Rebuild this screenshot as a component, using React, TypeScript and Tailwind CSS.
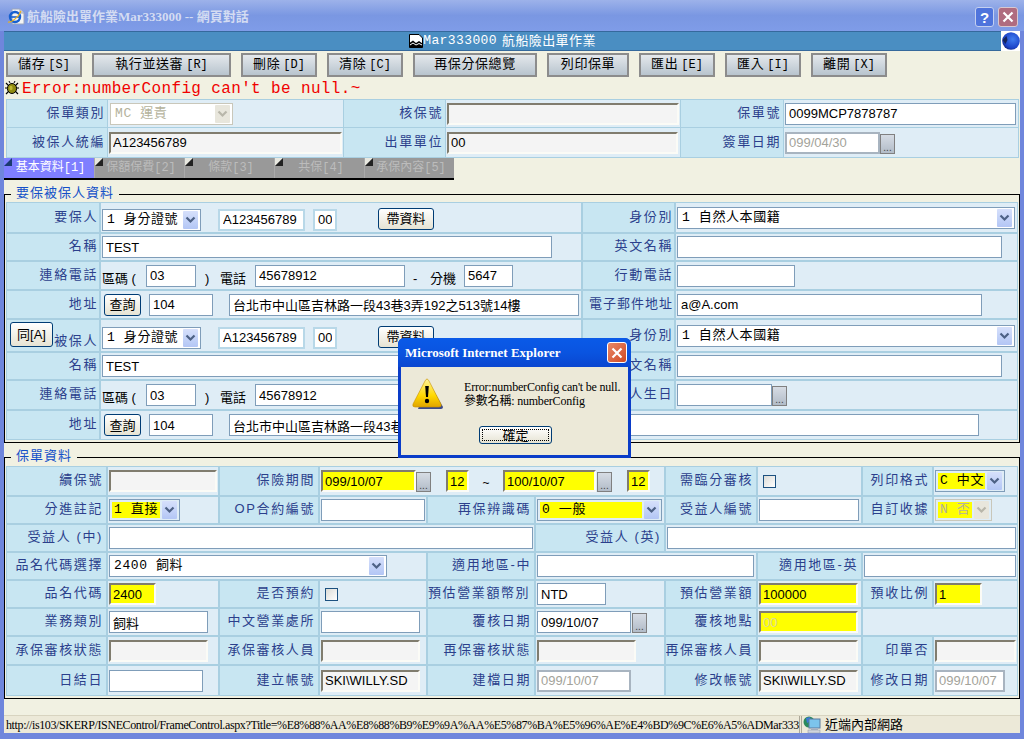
import React from 'react';

const inputNormal = 'h-[22px] px-[3px] text-[13px] text-black bg-white outline-none border border-[#7f9db9]';
const inputPale = 'h-[22px] px-[3px] text-[13px] text-black bg-white outline-none border-2 border-[#b8d8e8]';
const inputSunken = 'h-[22px] px-[2px] text-[13px] text-black bg-[#f4f4f4] outline-none border-2 border-t-[#807c6e] border-l-[#807c6e] border-r-[#fbfbf6] border-b-[#fbfbf6]';
const inputYellow = 'h-[22px] px-[2px] text-[13px] text-black bg-[#ffff00] outline-none border-2 border-t-[#807c6e] border-l-[#807c6e] border-r-[#fbfbf6] border-b-[#fbfbf6]';
const inputYellowPale = 'h-[22px] px-[2px] text-[13px] text-[#d8d8a0] bg-[#ffff00] outline-none border-2 border-t-[#807c6e] border-l-[#807c6e] border-r-[#fbfbf6] border-b-[#fbfbf6]';
const inputGray = 'h-[22px] px-[2px] text-[13px] text-[#a3a39a] bg-white outline-none border-2 border-[#a8b4c0]';
const monoFont = "font-['Liberation_Mono','Noto_Sans_CJK_TC',monospace]";

function Chevron({ disabled = false }: { disabled?: boolean }) {
  return (
    <svg width="11" height="8" viewBox="0 0 11 8">
      <path d="M1.5 1.5 L5.5 5.5 L9.5 1.5" fill="none" stroke={disabled ? '#b8b6aa' : '#4d6185'} strokeWidth="2.2" />
    </svg>
  );
}

function Select({
  text,
  className,
  yellow = false,
  disabled = false,
}: {
  text: string;
  className: string;
  yellow?: boolean;
  disabled?: boolean;
}) {
  return (
    <div
      className={`h-[22px] flex items-stretch p-[2px] shrink-0 border ${
        disabled ? 'border-[#c9c7ba]' : 'border-[#7f9db9]'
      } ${yellow ? 'bg-[#dfedf6]' : 'bg-white'} ${className}`}
    >
      <div
        className={`flex-1 min-w-0 flex items-center pl-[2px] whitespace-pre text-[13px] tracking-[0.6px] ${monoFont} ${
          yellow ? 'bg-[#ffff00]' : ''
        } ${disabled ? 'text-[#b4b29c]' : 'text-black'}`}
      >
        {text}
      </div>
      <div
        className={`w-[15px] ml-[2px] -mt-px -mb-px flex items-center justify-center rounded-[1px] ${
          disabled ? 'bg-[#e8e6dc]' : 'bg-gradient-to-b from-[#d6e0fb] to-[#b3c6f5]'
        }`}
      >
        <Chevron disabled={disabled} />
      </div>
    </div>
  );
}

function DotsButton({ className = '' }: { className?: string }) {
  return (
    <div
      className={`w-[15px] h-[20px] mt-[2px] shrink-0 flex items-end justify-center text-[10px] leading-[11px] text-[#444] border border-[#808080] bg-gradient-to-b from-[#d6dce4] to-[#b2bcc8] ${className}`}
    >
      ...
    </div>
  );
}

function FormButton({ text, className = '' }: { text: string; className?: string }) {
  return (
    <button
      className={`h-[22px] shrink-0 rounded-[3px] border border-[#003c74] bg-gradient-to-b from-white to-[#e6e3d3] text-[13px] leading-none text-black ${className}`}
    >
      {text}
    </button>
  );
}

function Label({ text, className = '' }: { text: string; className?: string }) {
  return (
    <div
      className={`bg-[#c8e6f2] flex items-center justify-end pr-[1px] pb-[2px] text-[13px] tracking-[1.6px] text-[#2b3f8c] whitespace-nowrap overflow-hidden ${className}`}
    >
      {text}
    </div>
  );
}

function Cell({ children, className = '' }: { children?: React.ReactNode; className?: string }) {
  return <div className={`bg-[#dfedf6] flex items-center pl-[1px] min-w-0 ${className}`}>{children}</div>;
}

function Check({ className = '' }: { className?: string }) {
  return (
    <div className={`w-[13px] h-[13px] border border-[#1c5180] bg-gradient-to-br from-[#dcdcd7] to-white ${className}`} />
  );
}

function IeIcon() {
  return (
    <svg width="18" height="18" viewBox="0 0 18 18">
      <path d="M5 1 H13 L17 5 V16 H5 Z" fill="#f4f4f4" stroke="#9aa4bc" />
      <path d="M13 1 V5 H17" fill="#d4d8e4" stroke="#9aa4bc" />
      <circle cx="8" cy="9" r="5" fill="none" stroke="#1660d0" strokeWidth="2.4" />
      <path d="M3 9 H13" stroke="#1660d0" strokeWidth="1.6" />
      <path d="M1 14 C4 15 12 9 14 3" fill="none" stroke="#e8b020" strokeWidth="1.2" />
    </svg>
  );
}

function BugIcon() {
  return (
    <svg width="14" height="15" viewBox="0 0 14 15">
      <path d="M1 3 L4 6 M13 3 L10 6 M0 8 H3 M14 8 H11 M1 14 L4 11 M13 14 L10 11" stroke="#000" strokeWidth="1.2" />
      <path d="M5 3 L4 1 M9 3 L10 1" stroke="#000" strokeWidth="1" />
      <ellipse cx="7" cy="8.5" rx="4.6" ry="5" fill="#8f8a10" stroke="#000" />
      <ellipse cx="6" cy="8" rx="1.6" ry="2.2" fill="#c2bc30" />
    </svg>
  );
}

function GlobeIcon() {
  return (
    <svg width="19" height="20" viewBox="0 0 19 20">
      <defs>
        <radialGradient id="globe" cx="0.6" cy="0.4" r="0.7">
          <stop offset="0" stopColor="#3f7df0" />
          <stop offset="0.7" stopColor="#1c44c8" />
          <stop offset="1" stopColor="#0c1e70" />
        </radialGradient>
      </defs>
      <circle cx="10" cy="10" r="8.8" fill="url(#globe)" />
      <path d="M1.5 9 L5.5 5 L6.5 9 L4.5 13 Z" fill="#14245c" />
    </svg>
  );
}

function BrokenImage() {
  return (
    <svg width="14" height="14" viewBox="0 0 14 14">
      <path d="M0.5 0.5 H10 L13.5 4 V13.5 H0.5 Z" fill="#fff" stroke="#000" />
      <path d="M0.5 9 L4 6.5 L7 9 L10 7 L13.5 9.5 V13.5 H0.5 Z" fill="#000" />
      <path d="M1 11 L4 9 L7 11 L10 9.5 L13 11" fill="none" stroke="#fff" />
    </svg>
  );
}

function WarningIcon() {
  return (
    <svg width="32" height="32" viewBox="0 0 32 32">
      <defs>
        <linearGradient id="warn" x1="0" y1="0" x2="0" y2="1">
          <stop offset="0" stopColor="#fff39a" />
          <stop offset="0.6" stopColor="#ffd800" />
          <stop offset="1" stopColor="#e0a400" />
        </linearGradient>
      </defs>
      <path d="M16.5 4 L31 29 Q31 31 29 31 H6 Z" fill="#3b4a8a" />
      <path d="M15 1 Q16 1 17 3 L29 26 Q30 29 27 29 H3 Q0 29 1 26 L13 3 Q14 1 15 1 Z" fill="url(#warn)" stroke="#c89000" strokeWidth="0.6" />
      <path d="M13.2 8 H16.8 L16 19 H14 Z" fill="#000" />
      <circle cx="15" cy="23" r="2.2" fill="#000" />
    </svg>
  );
}

function NetworkIcon() {
  return (
    <svg width="18" height="18" viewBox="0 0 18 18">
      <circle cx="6" cy="6" r="5.5" fill="#2b8a5c" />
      <path d="M3 2 L7 1 L8 5 L4 7 Z" fill="#3a78d8" />
      <rect x="6" y="3" width="11" height="9" fill="#7cc4ec" stroke="#5a7aa0" />
      <rect x="8" y="12" width="7" height="2" fill="#a8b4c4" />
      <rect x="5" y="14" width="12" height="3" fill="#d0d4dc" stroke="#8a94a4" strokeWidth="0.5" />
    </svg>
  );
}

const toolbar = [
  { head: '儲存', key: '[S]', width: 'w-[76px]' },
  { head: '執行並送審', key: '[R]', width: 'w-[139px]' },
  { head: '刪除', key: '[D]', width: 'w-[76px]' },
  { head: '清除', key: '[C]', width: 'w-[76px]' },
  { head: '再保分保總覽', key: '', width: 'w-[124px]' },
  { head: '列印保單', key: '', width: 'w-[82px]' },
  { head: '匯出', key: '[E]', width: 'w-[76px]' },
  { head: '匯入', key: '[I]', width: 'w-[76px]' },
  { head: '離開', key: '[X]', width: 'w-[76px]' },
];

const tabs = ['基本資料[1]', '保額保費[2]', '條款[3]', '共保[4]', '承保內容[5]'];

function PersonRows({ role, first }: { role: string; first: boolean }) {
  return (
    <>
      {first ? (
        <Label text={role} />
      ) : (
        <div className="bg-[#c8e6f2] flex justify-between pl-[3px] pr-[1px] text-[13px] tracking-[1.6px] text-[#2b3f8c]">
          <button className="w-[43px] h-[25px] mt-[2px] rounded-[3px] border border-[#003c74] bg-gradient-to-b from-white to-[#e6e3d3] text-[13px] tracking-normal text-black">
            同[A]
          </button>
          <span className="self-end mb-[1px]">{role}</span>
        </div>
      )}
      <Cell className="pt-[4px]">
        <Select text="1 身分證號" className="w-[99px]" />
        <input readOnly defaultValue="A123456789" className={`${inputPale} w-[87px] ml-[17px]`} />
        <input readOnly defaultValue="00" className={`${inputPale} w-[24px] ml-[8px]`} />
        <FormButton text="帶資料" className="w-[56px] ml-[41px] -mt-[2px]" />
      </Cell>
      <Label text="身份別" />
      <Cell>
        <Select text="1 自然人本國籍" className="w-[338px]" />
      </Cell>

      <Label text="名稱" />
      <Cell>
        <input readOnly defaultValue="TEST" className={`${inputNormal} w-[450px]`} />
      </Cell>
      <Label text="英文名稱" />
      <Cell>
        <input readOnly className={`${inputNormal} w-[325px]`} />
      </Cell>

      <Label text="連絡電話" />
      <Cell>
        <span className="w-[44px] mt-[6px] text-[13px] whitespace-pre">區碼 (</span>
        <input readOnly defaultValue="03" className={`${inputNormal} w-[50px]`} />
        <span className="w-[59px] mt-[6px] pl-[9px] pr-[9px] text-[13px] flex justify-between">
          <span>)</span>
          <span>電話</span>
        </span>
        <input readOnly defaultValue="45678912" className={`${inputNormal} w-[150px]`} />
        {first && (
          <>
            <span className="w-[59px] mt-[6px] pl-[8px] pr-[8px] text-[13px] flex justify-between">
              <span>-</span>
              <span>分機</span>
            </span>
            <input readOnly defaultValue="5647" className={`${inputNormal} w-[49px]`} />
          </>
        )}
      </Cell>
      <Label text={first ? '行動電話' : '被保人生日'} />
      <Cell>
        {first ? (
          <input readOnly className={`${inputNormal} w-[118px]`} />
        ) : (
          <>
            <input readOnly className={`${inputNormal} w-[95px]`} />
            <DotsButton />
          </>
        )}
      </Cell>

      <Label text="地址" />
      {first ? (
        <>
          <Cell>
            <FormButton text="查詢" className="w-[37px] ml-[2px]" />
            <input readOnly defaultValue="104" className={`${inputNormal} w-[64px] ml-[8px]`} />
            <input
              readOnly
              defaultValue="台北市中山區吉林路一段43巷3弄192之513號14樓"
              className={`${inputNormal} w-[350px] ml-[16px]`}
            />
          </Cell>
          <Label text="電子郵件地址" className="tracking-[1px]" />
          <Cell>
            <input readOnly defaultValue="a@A.com" className={`${inputNormal} w-[305px]`} />
          </Cell>
        </>
      ) : (
        <Cell className="col-span-3">
          <FormButton text="查詢" className="w-[37px] ml-[2px]" />
          <input readOnly defaultValue="104" className={`${inputNormal} w-[64px] ml-[8px]`} />
          <input
            readOnly
            defaultValue="台北市中山區吉林路一段43巷3弄192之513號14樓"
            className={`${inputNormal} w-[750px] ml-[16px]`}
          />
        </Cell>
      )}
    </>
  );
}

export default function App() {
  return (
    <div className="relative w-[1024px] h-[739px] overflow-hidden flex flex-col bg-[#6f86dc] font-['Liberation_Sans','Noto_Sans_CJK_TC',sans-serif]">
      {/* Title bar */}
      <div className="h-[31px] shrink-0 flex items-center pt-[3px] pl-[7px] pr-[6px] bg-gradient-to-b from-[#9db2ea] via-[#7a97e2] to-[#7f9ce8]">
        <IeIcon />
        <span className="ml-[2px] text-[13px] font-bold text-[#d4dcf2] font-['Liberation_Serif','Noto_Sans_CJK_TC',serif]">
          航船險出單作業Mar333000 -- 網頁對話
        </span>
        <div className="ml-auto flex gap-[4px]">
          <div className="w-[19px] h-[20px] rounded-[3px] border border-[#c4d0f0] bg-[#4f74dc] flex items-center justify-center text-[15px] font-bold text-white leading-none">
            ?
          </div>
          <div className="w-[20px] h-[20px] rounded-[3px] border border-[#d8c8d0] bg-[#b06c80] flex items-center justify-center">
            <svg width="12" height="12" viewBox="0 0 12 12">
              <path d="M1.5 1.5 L10.5 10.5 M10.5 1.5 L1.5 10.5" stroke="#fff" strokeWidth="2.2" />
            </svg>
          </div>
        </div>
      </div>

      {/* Page */}
      <div className="flex-1 mx-[4px] flex flex-col bg-[#f1f1e2] min-h-0">
        <div className="h-[20px] shrink-0 flex bg-[#4a8ec2] border-t border-b border-[#35699c]">
          <div className="flex-1 flex items-center justify-center text-[13px] text-white tracking-[0.4px]">
            <BrokenImage />
            <span className={monoFont}>Mar333000</span>
            <span className="ml-[5px]">航船險出單作業</span>
          </div>
          <div className="w-[19px] -mt-px -mb-px bg-white">
            <GlobeIcon />
          </div>
        </div>

        {/* Toolbar */}
        <div className="flex gap-[10px] pl-[2px] pt-[2px] shrink-0">
          {toolbar.map((b) => (
            <button
              key={b.head}
              className={`${b.width} h-[24px] border-2 border-[#8c8c8c] bg-gradient-to-b from-[#e4e8ec] to-[#b8c4ce] text-[13px] tracking-[0.6px] text-black ${monoFont}`}
            >
              {b.head}
              {b.key && <span className="ml-[3px] text-[12px] tracking-normal">{b.key}</span>}
            </button>
          ))}
        </div>

        {/* Error line */}
        <div className="h-[22px] shrink-0 flex items-center pl-[1px] pb-[1px]">
          <BugIcon />
          <span className={`ml-[3px] mt-[3px] text-[16px] tracking-[0.36px] text-[#f00000] ${monoFont}`}>
            Error:numberConfig can't be null.~
          </span>
        </div>

        {/* Header form */}
        <div className="ml-[2px] w-[1013px] shrink-0 grid grid-cols-[100px_235px_101px_234px_102px_234px] grid-rows-[27px_29px] gap-x-px gap-y-px p-px bg-[#a9cfe1]">
          <Label text="保單類別" className="pr-[2px]" />
          <Cell className="pl-[2px]">
            <Select text="MC 運責" className="w-[123px]" disabled />
          </Cell>
          <Label text="核保號" className="pr-[2px]" />
          <Cell>
            <input readOnly className={`${inputSunken} w-[232px]`} />
          </Cell>
          <Label text="保單號" className="pr-[2px]" />
          <Cell>
            <input readOnly defaultValue="0099MCP7878787" className={`${inputNormal} w-[231px]`} />
          </Cell>

          <Label text="被保人統編" className="pr-[2px]" />
          <Cell>
            <input readOnly defaultValue="A123456789" className={`${inputSunken} w-[233px]`} />
          </Cell>
          <Label text="出單單位" className="pr-[2px]" />
          <Cell>
            <input readOnly defaultValue="00" className={`${inputSunken} w-[231px]`} />
          </Cell>
          <Label text="簽單日期" className="pr-[2px]" />
          <Cell>
            <input readOnly defaultValue="099/04/30" className={`${inputGray} w-[95px]`} />
            <DotsButton />
          </Cell>
        </div>

        {/* Tabs */}
        <div className="h-[22px] w-[450px] shrink-0 flex border-b-2 border-black">
          {tabs.map((t, i) => (
            <div
              key={t}
              className={`relative w-[90px] pl-[3px] flex items-center justify-center text-[12px] ${
                i === 0 ? 'bg-[#7f7fff] text-white' : 'bg-[#999999] text-[#bcbcbc] border-l border-[#aaaaaa]'
              } ${monoFont}`}
            >
              <svg className="absolute left-0 top-0" width="8" height="8" viewBox="0 0 8 8">
                <path d="M0 0 H8 L0 8 Z" fill={i === 0 ? '#7f7fff' : '#e8e8e0'} />
                <path d="M8 0 V8 H0 Z" fill={i === 0 ? '#1a3a70' : '#222222'} />
              </svg>
              {t}
            </div>
          ))}
        </div>

        {/* 要保被保人資料 */}
        <fieldset className="mt-[6px] border border-black shrink-0 px-px pb-[2px]">
          <legend className="ml-[5px] px-[5px] h-[16px] text-[13px] leading-[14px] tracking-[1px] text-[#1450c8]">要保被保人資料</legend>
          <div className="relative grid grid-cols-[92px_480px_91px_341px] grid-rows-[29px_26px_27px_27px_31px_26px_28px_28px] gap-[2px] p-px bg-[#a9cfe1]">
            <PersonRows role="要保人" first />
            <PersonRows role="被保人" first={false} />
          </div>
        </fieldset>

        {/* 保單資料 */}
        <fieldset className="mt-[6px] border border-black shrink-0 px-px pb-[2px]">
          <legend className="ml-[5px] px-[5px] h-[16px] text-[13px] leading-[14px] tracking-[1px] text-[#1450c8]">保單資料</legend>
          <div className="mt-px grid grid-cols-[99px_110px_98px_106px_106px_128px_90px_103px_69px_83px] grid-rows-[28px_26px_26px_26px_26px_26px_27px_29px] gap-[2px] p-px bg-[#a9cfe1]">
            {/* row 1 */}
            <Label text="續保號" className="pr-[3px]" />
            <Cell>
              <input readOnly className={`${inputSunken} w-[108px]`} />
            </Cell>
            <Label text="保險期間" className="pr-[3px]" />
            <Cell className="col-span-3">
              <input readOnly defaultValue="099/10/07" className={`${inputYellow} w-[95px]`} />
              <DotsButton />
              <input readOnly defaultValue="12" className={`${inputYellow} w-[23px] ml-[15px]`} />
              <span className="w-[34px] text-center text-[12px] mt-[4px]">~</span>
              <input readOnly defaultValue="100/10/07" className={`${inputYellow} w-[93px]`} />
              <DotsButton className="ml-px" />
              <input readOnly defaultValue="12" className={`${inputYellow} w-[23px] ml-[15px]`} />
            </Cell>
            <Label text="需臨分審核" className="pr-[3px]" />
            <Cell>
              <Check className="ml-[4px]" />
            </Cell>
            <Label text="列印格式" className="pr-[3px]" />
            <Cell>
              <Select text="C 中文" className="w-[70px]" yellow />
            </Cell>

            {/* row 2 */}
            <Label text="分進註記" className="pr-[3px]" />
            <Cell>
              <Select text="1 直接" className="w-[71px]" yellow />
            </Cell>
            <Label text="OP合約編號" className="pr-[3px]" />
            <Cell>
              <input readOnly className={`${inputNormal} w-[104px]`} />
            </Cell>
            <Label text="再保辨識碼" className="pr-[3px]" />
            <Cell>
              <Select text="0 一般" className="w-[125px]" yellow />
            </Cell>
            <Label text="受益人編號" className="pr-[3px]" />
            <Cell>
              <input readOnly className={`${inputNormal} w-[100px]`} />
            </Cell>
            <Label text="自訂收據" className="pr-[3px]" />
            <Cell>
              <Select text="N 否" className="w-[57px]" yellow disabled />
            </Cell>

            {/* row 3 */}
            <Label text="受益人 (中)" className="pr-[3px]" />
            <Cell className="col-span-4">
              <input readOnly className={`${inputNormal} w-[424px]`} />
            </Cell>
            <Label text="受益人 (英)" className="pr-[3px]" />
            <Cell className="col-span-4">
              <input readOnly className={`${inputNormal} w-[349px]`} />
            </Cell>

            {/* row 4 */}
            <Label text="品名代碼選擇" className="pr-[3px]" />
            <Cell className="col-span-3">
              <Select text="2400 飼料" className="w-[278px]" />
            </Cell>
            <Label text="適用地區-中" className="pr-[3px]" />
            <Cell className="col-span-2">
              <input readOnly className={`${inputNormal} w-[217px]`} />
            </Cell>
            <Label text="適用地區-英" className="pr-[3px]" />
            <Cell className="col-span-2">
              <input readOnly className={`${inputNormal} w-[152px]`} />
            </Cell>

            {/* row 5 */}
            <Label text="品名代碼" className="pr-[3px]" />
            <Cell>
              <input readOnly defaultValue="2400" className={`${inputYellow} w-[47px]`} />
            </Cell>
            <Label text="是否預約" className="pr-[3px]" />
            <Cell>
              <Check className="ml-[4px]" />
            </Cell>
            <Label text="預估營業額幣別" className="pr-[3px] tracking-[1.2px] justify-start" />
            <Cell>
              <input readOnly defaultValue="NTD" className={`${inputNormal} w-[69px]`} />
            </Cell>
            <Label text="預估營業額" className="pr-[3px]" />
            <Cell>
              <input readOnly defaultValue="100000" className={`${inputYellow} w-[99px]`} />
            </Cell>
            <Label text="預收比例" className="pr-[3px]" />
            <Cell>
              <input readOnly defaultValue="1" className={`${inputYellow} w-[47px]`} />
            </Cell>

            {/* row 6 */}
            <Label text="業務類別" className="pr-[3px]" />
            <Cell>
              <input readOnly defaultValue="飼料" className={`${inputNormal} w-[99px]`} />
            </Cell>
            <Label text="中文營業處所" className="pr-[3px]" />
            <Cell>
              <input readOnly className={`${inputNormal} w-[99px]`} />
            </Cell>
            <Label text="覆核日期" className="pr-[3px]" />
            <Cell>
              <input readOnly defaultValue="099/10/07" className={`${inputNormal} w-[94px]`} />
              <DotsButton className="ml-px" />
            </Cell>
            <Label text="覆核地點" className="pr-[3px]" />
            <Cell>
              <input readOnly defaultValue="00" className={`${inputYellowPale} w-[99px]`} />
            </Cell>
            <Cell className="col-span-2" />

            {/* row 7 */}
            <Label text="承保審核狀態" className="pr-[3px]" />
            <Cell>
              <input readOnly className={`${inputSunken} w-[99px]`} />
            </Cell>
            <Label text="承保審核人員" className="pr-[3px]" />
            <Cell>
              <input readOnly className={`${inputSunken} w-[99px]`} />
            </Cell>
            <Label text="再保審核狀態" className="pr-[3px]" />
            <Cell>
              <input readOnly className={`${inputSunken} w-[99px]`} />
            </Cell>
            <Label text="再保審核人員" className="pr-[3px]" />
            <Cell>
              <input readOnly className={`${inputSunken} w-[99px]`} />
            </Cell>
            <Label text="印單否" className="pr-[3px]" />
            <Cell>
              <input readOnly className={`${inputSunken} w-[81px]`} />
            </Cell>

            {/* row 8 */}
            <Label text="日結日" className="pr-[3px]" />
            <Cell>
              <input readOnly className={`${inputNormal} w-[94px]`} />
            </Cell>
            <Label text="建立帳號" className="pr-[3px]" />
            <Cell>
              <input readOnly defaultValue="SKI\WILLY.SD" className={`${inputSunken} w-[99px]`} />
            </Cell>
            <Label text="建檔日期" className="pr-[3px]" />
            <Cell>
              <input readOnly defaultValue="099/10/07" className={`${inputGray} w-[94px]`} />
            </Cell>
            <Label text="修改帳號" className="pr-[3px]" />
            <Cell>
              <input readOnly defaultValue="SKI\WILLY.SD" className={`${inputSunken} w-[99px]`} />
            </Cell>
            <Label text="修改日期" className="pr-[3px]" />
            <Cell>
              <input readOnly defaultValue="099/10/07" className={`${inputGray} w-[70px]`} />
            </Cell>
          </div>
        </fieldset>

        {/* Status bar */}
        <div className="mt-auto h-[18px] shrink-0 flex bg-[#ece9d8] border-t border-[#d8d4c0] text-[12px] text-black font-['Liberation_Serif','Noto_Sans_CJK_TC',serif]">
          <div className="w-[796px] pl-[2px] flex items-center whitespace-nowrap overflow-hidden border-r border-[#aca899] tracking-[-0.38px]">
            http://is103/SKERP/ISNEControl/FrameControl.aspx?Title=%E8%88%AA%E8%88%B9%E9%9A%AA%E5%87%BA%E5%96%AE%E4%BD%9C%E6%A5%ADMar333
          </div>
          <div className="flex-1 ml-[1px] pl-[1px] flex items-center gap-[4px] border-l border-[#aca899] text-[13px] font-['Liberation_Sans','Noto_Sans_CJK_TC',sans-serif]">
            <NetworkIcon />
            近端內部網路
          </div>
        </div>
      </div>
      <div className="h-[6px] shrink-0" />

      {/* Alert dialog */}
      <div className="absolute left-[398px] top-[338px] w-[233px] h-[120px] flex flex-col rounded-t-[6px] bg-[#0a3cc8] px-[3px] pb-[3px]">
        <div className="h-[29px] shrink-0 flex items-center pl-[7px] pr-[2px] -mx-[3px] rounded-t-[6px] bg-gradient-to-b from-[#0a5ae8] via-[#0a54e0] to-[#0a46d0]">
          <span className="text-[13px] font-bold text-white font-['Liberation_Serif',serif]">Microsoft Internet Explorer</span>
          <div className="ml-auto mr-[2px] w-[20px] h-[21px] rounded-[3px] border border-white bg-gradient-to-br from-[#e88868] to-[#d04820] flex items-center justify-center">
            <svg width="12" height="12" viewBox="0 0 12 12">
              <path d="M1.5 1.5 L10.5 10.5 M10.5 1.5 L1.5 10.5" stroke="#fff" strokeWidth="2.2" />
            </svg>
          </div>
        </div>
        <div className="flex-1 flex flex-col bg-[#ece9d8]">
          <div className="flex pl-[11px] pt-[11px]">
            <WarningIcon />
            <div className="ml-[20px] mt-[2px] text-[12px] leading-[14px] text-black tracking-[-0.2px] whitespace-nowrap font-['Liberation_Serif','Noto_Sans_CJK_TC',serif]">
              <div>Error:numberConfig can't be null.</div>
              <div>參數名稱: numberConfig</div>
            </div>
          </div>
          <button className="mt-[16px] ml-[78px] w-[73px] h-[18px] rounded-[3px] border border-[#003c74] bg-gradient-to-b from-white to-[#e6e3d3] text-[13px] leading-none text-black outline-1 -outline-offset-4 outline-dotted outline-black">
            確定
          </button>
        </div>
      </div>
    </div>
  );
}
